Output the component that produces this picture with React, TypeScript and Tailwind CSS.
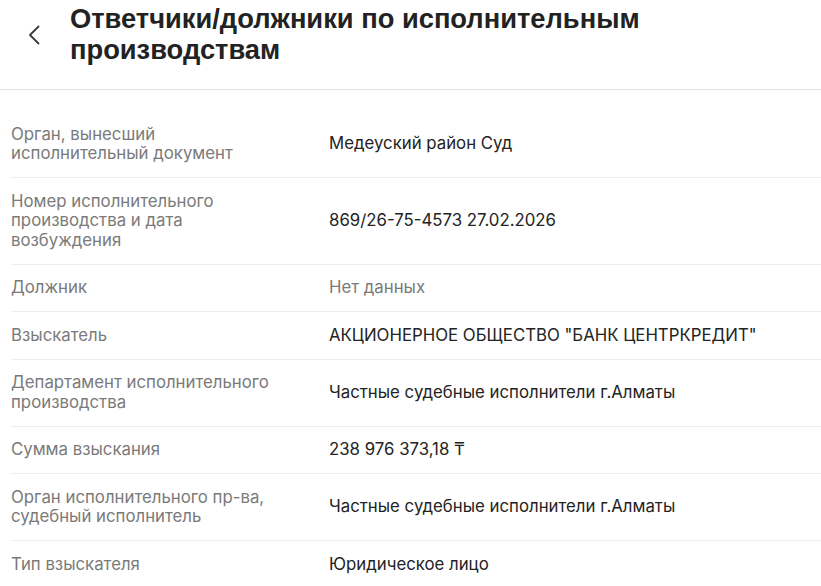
const rows: { label: string; value: string; muted?: boolean }[] = [
  { label: "Орган, вынесший исполнительный документ", value: "Медеуский район Суд" },
  { label: "Номер исполнительного производства и дата возбуждения", value: "869/26-75-4573 27.02.2026" },
  { label: "Должник", value: "Нет данных", muted: true },
  { label: "Взыскатель", value: 'АКЦИОНЕРНОЕ ОБЩЕСТВО "БАНК ЦЕНТРКРЕДИТ"' },
  { label: "Департамент исполнительного производства", value: "Частные судебные исполнители г.Алматы" },
  { label: "Сумма взыскания", value: "238 976 373,18 ₸" },
  { label: "Орган исполнительного пр-ва, судебный исполнитель", value: "Частные судебные исполнители г.Алматы" },
  { label: "Тип взыскателя", value: "Юридическое лицо" },
];

export default function App() {
  return (
    <div className="h-[586px] w-full overflow-hidden bg-white font-['Inter',sans-serif]">
      {/* header */}
      <header className="flex items-center border-b border-[#e3e3e3] pt-[3px] pb-[24px]">
        <div className="flex w-[70px] shrink-0 justify-center pr-[2px] pt-[2px]">
          <svg width="12" height="20" viewBox="0 0 12 20" fill="none">
            <polyline
              points="10.5,1.5 2,10 10.5,18.5"
              stroke="#3a3a3a"
              strokeWidth="1.8"
              strokeLinecap="round"
              strokeLinejoin="round"
            />
          </svg>
        </div>
        <h1 className="font-['Liberation_Sans',Arial,sans-serif] text-[27.3px] font-bold leading-[31px] text-[#222]">
          Ответчики/должники по исполнительным
          <br />
          производствам
        </h1>
      </header>

      {/* details list */}
      <dl className="mt-[21px] pl-[11px]">
        {rows.map((r) => (
          <div
            key={r.label}
            className="grid grid-cols-[318px_1fr] items-center border-b border-[#ececec] py-[13.5px] text-[16.8px] leading-[19.5px]"
          >
            <dt className="pr-[48px] text-[#7a7a7a]">{r.label}</dt>
            <dd className={r.muted ? "text-[#7a7a7a]" : "text-[#232323]"}>{r.value}</dd>
          </div>
        ))}
      </dl>
    </div>
  );
}
